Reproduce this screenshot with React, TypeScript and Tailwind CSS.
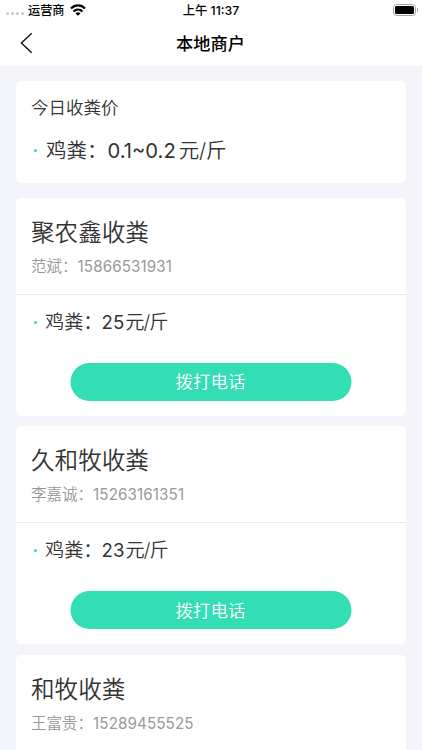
interface Merchant {
  name: string
  contact: string
  phone: string
  price?: string
}

const merchants: Merchant[] = [
  { name: '聚农鑫收粪', contact: '范斌', phone: '15866531931', price: '25' },
  { name: '久和牧收粪', contact: '李嘉诚', phone: '15263161351', price: '23' },
  { name: '和牧收粪', contact: '王富贵', phone: '15289455525' },
]

function StatusBar() {
  return (
    <div className="relative flex h-5 items-center justify-between pl-[6px] pr-1 text-black">
      <div className="flex items-center">
        <div className="mt-[7px] flex gap-[2px]">
          {[0, 1, 2, 3].map((i) => (
            <span key={i} className="h-[3px] w-[3px] rounded-full bg-[#c8c8c8]" />
          ))}
        </div>
        <span className="ml-[4px] mt-px text-[12.2px] font-medium leading-5">运营商</span>
        <svg className="ml-[5px] h-[12px] w-[16px]" viewBox="0 0 16 12" fill="none" stroke="#000" strokeWidth="2.2">
          <path d="M1 4.6C5 .4 11 .4 15 4.6" />
          <path d="M3.5 7.5c2.6-2.6 6.4-2.6 9 0" />
          <path d="M8 11.8 5.5 9.4c1.4-1.4 3.6-1.4 5 0z" fill="#000" stroke="none" />
        </svg>
      </div>
      <div className="absolute inset-x-0 top-px text-center text-[12.3px] font-medium leading-5">
        上午 11:37
      </div>
      <div className="flex items-center">
        <div className="h-[12px] w-[23px] rounded-[3.5px] border border-[#a3a3a3] p-px">
          <div className="h-full w-full rounded-[1.5px] bg-black" />
        </div>
        <div className="ml-px h-1 w-[1.5px] rounded-r-full bg-[#a3a3a3]" />
      </div>
    </div>
  )
}

function Header() {
  return (
    <header className="relative flex h-[46px] items-center justify-center">
      <svg className="absolute left-5 top-[12px] h-[22px] w-[14px]" viewBox="0 0 14 22" fill="none" stroke="#111" strokeWidth="1.4">
        <path d="M11.7 1.3 1.4 11l10.3 9.7" />
      </svg>
      <h1 className="-ml-px mt-px text-[17.2px] font-medium text-black">本地商户</h1>
    </header>
  )
}

function MerchantCard({ name, contact, phone, price }: Merchant) {
  return (
    <section className="h-[218px] shrink-0 rounded-[5px] bg-white">
      <div className="h-[97px] border-b border-[#e8e8e8] px-[15px] pt-[19px]">
        <h2 className="text-[23.6px] leading-8 text-[#333]">{name}</h2>
        <p className="mt-[7px] flex text-[15.5px] leading-[22px] text-[#999]">
          <span>{contact}：</span>
          <span className="text-[15.2px] font-normal tracking-[0.1px]">{phone}</span>
        </p>
      </div>
      {price && (
        <>
          <div className="flex h-[54px] items-center pl-[18px] pt-px text-[19.2px] text-[#333]">
            <span className="mr-[8px] h-[3px] w-[3px] rounded-full bg-[#34deb4]" />
            <span>鸡粪：</span>
            <span className="-ml-px text-[18.6px] font-normal">{price}</span>
            <span className="ml-px tracking-[-0.9px]">元/斤</span>
          </div>
          <button className="mx-auto mt-[14px] block h-[38px] w-[281px] -translate-x-[0.5px] rounded-full bg-[#34deb4] pt-px text-[17.5px] text-white">
            拨打电话
          </button>
        </>
      )}
    </section>
  )
}

export default function App() {
  return (
    <div className="flex h-[750px] w-[422px] flex-col overflow-hidden bg-[#f4f5fa] font-['Inter','Noto_Sans_CJK_SC',sans-serif] font-[350]">
      <div className="h-[66px] shrink-0 bg-white">
        <StatusBar />
        <Header />
      </div>
      <main className="flex flex-col px-4 pt-[15px]">
        <section className="h-[102px] shrink-0 rounded-[5px] bg-white px-[15px] pt-[15px] text-[#333]">
          <h2 className="text-[17.5px] leading-6">今日收粪价</h2>
          <div className="mt-[17px] flex items-center pl-[3px] text-[20.5px] leading-7">
            <span className="mb-0.5 mr-[9px] h-[3px] w-[3px] rounded-full bg-[#34deb4]" />
            <span>鸡粪：</span>
            <span className="text-[20.2px] font-normal">0.1~0.2</span>
            <span className="ml-[3px] tracking-[-0.2px]">元/斤</span>
          </div>
        </section>
        <div className="mt-[15px] flex flex-col gap-[10.33px]">
          {merchants.map((m) => (
            <MerchantCard key={m.phone} {...m} />
          ))}
        </div>
      </main>
    </div>
  )
}
